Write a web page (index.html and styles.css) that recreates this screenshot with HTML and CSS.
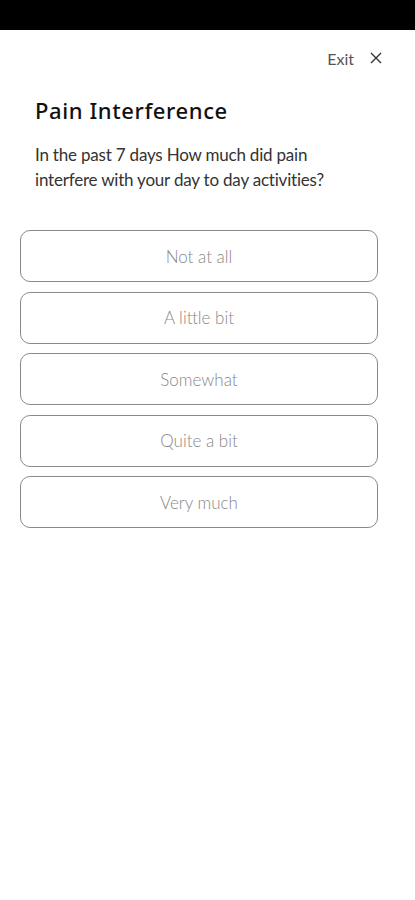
FILE: index.html
```html
<!DOCTYPE html>
<html>
<head>
<meta charset="utf-8">
<link rel="stylesheet" href="styles.css">
</head>
<body>
<div class="statusbar"></div>
<div class="topbar">
  <button class="exit">Exit <svg class="x" width="12" height="12" viewBox="0 0 12 12"><path d="M1 1L11 11M11 1L1 11" stroke="#333" stroke-width="1.4" fill="none"/></svg></button>
</div>
<main class="content">
  <h1 class="title">Pain Interference</h1>
  <p class="question">In the past 7 days How much did pain interfere with your day to day activities?</p>
  <div class="options">
    <button class="option">Not at all</button>
    <button class="option">A little bit</button>
    <button class="option">Somewhat</button>
    <button class="option">Quite a bit</button>
    <button class="option">Very much</button>
  </div>
</main>
</body>
</html>
```

FILE: styles.css
```css
html, body {
  margin: 0;
  padding: 0;
  background: #fff;
}
body {
  width: 415px;
  height: 900px;
  font-family: "Open Sans", "Noto Sans", sans-serif;
  color: #222;
}
.statusbar {
  height: 30px;
  background: #000;
}
.topbar {
  display: flex;
  justify-content: flex-end;
  padding: 17px 33px 0 0;
  height: 22px;
}
.exit {
  display: flex;
  align-items: center;
  gap: 16px;
  border: none;
  background: none;
  padding: 0;
  font-family: "Lato", sans-serif;
  font-size: 16px;
  color: #555;
}
.content {
  padding: 0 20px 0 20px;
}
.title {
  margin: 27px 0 0 15px;
  font-family: "Noto Sans", sans-serif;
  font-size: 22px;
  font-weight: 500;
  letter-spacing: 0.6px;
  color: #111;
  line-height: 28px;
}
.question {
  margin: 18px 0 0 15px;
  max-width: 310px;
  font-family: "Lato", sans-serif;
  font-size: 17px;
  letter-spacing: -0.2px;
  line-height: 25px;
  color: #333;
}
.options {
  margin-top: 38px;
  display: flex;
  flex-direction: column;
  gap: 9.5px;
  width: 358px;
}
.option {
  height: 52px;
  border: 1.5px solid #8a8a8a;
  border-radius: 10px;
  background: #fff;
  font-family: "Lato", sans-serif;
  font-weight: 300;
  font-size: 17px;
  color: #888;
}
```
